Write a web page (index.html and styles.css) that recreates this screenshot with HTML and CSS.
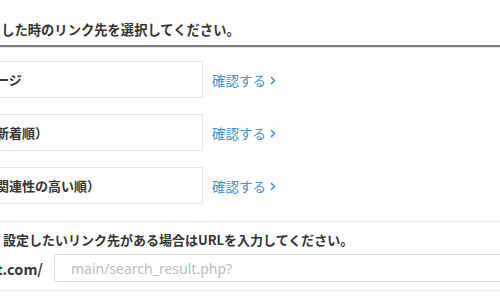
FILE: index.html
```html
<!DOCTYPE html>
<html lang="ja">
<head>
    <meta charset="UTF-8">
    <meta name="viewport" content="width=device-width, initial-scale=1.0">
    <title>リンク先設定</title>
    <link rel="stylesheet" href="styles.css">
</head>
<body>
    <div class="page">
        <h2 class="section-title">クリックした時のリンク先を選択してください。</h2>

        <ul class="link-list">
            <li class="link-row">
                <div class="link-box">商品詳細ページ</div>
                <a href="#" class="check-link">確認する<svg class="chev" width="6" height="9" viewBox="0 0 6 9"><path d="M1 1l3.5 3.5L1 8" fill="none" stroke="currentColor" stroke-width="1.6"/></svg></a>
            </li>
            <li class="link-row">
                <div class="link-box">検索結果（新着順）</div>
                <a href="#" class="check-link">確認する<svg class="chev" width="6" height="9" viewBox="0 0 6 9"><path d="M1 1l3.5 3.5L1 8" fill="none" stroke="currentColor" stroke-width="1.6"/></svg></a>
            </li>
            <li class="link-row">
                <div class="link-box">検索結果（関連性の高い順）</div>
                <a href="#" class="check-link">確認する<svg class="chev" width="6" height="9" viewBox="0 0 6 9"><path d="M1 1l3.5 3.5L1 8" fill="none" stroke="currentColor" stroke-width="1.6"/></svg></a>
            </li>
        </ul>

        <div class="custom-url">
            <p class="custom-note">設定したいリンク先がある場合はURLを入力してください。</p>
            <div class="url-row">
                <div class="url-prefix"><span>https://www.example-test.com/</span></div>
                <input type="text" class="url-input" placeholder="main/search_result.php?">
            </div>
        </div>
    </div>
</body>
</html>
```

FILE: styles.css
```css
:root {
    --text-color: #333;
    --link-color: #4a8fc8;
    --line-color: #e8e8e8;
    --box-border: #e6e6e6;
}

* {
    margin: 0;
    padding: 0;
    box-sizing: border-box;
    font-family: "Noto Sans CJK JP", "Noto Sans", sans-serif;
}

body {
    color: var(--text-color);
    background-color: #fff;
    overflow: hidden;
}

.page {
    margin-left: -70px;
    width: 640px;
}

.section-title {
    font-size: 13.3px;
    font-weight: 700;
    line-height: 20px;
    padding: 20px 0 5px 18px;
    border-bottom: 2px solid #7b7b7b;
    box-shadow: 0 1px 0 #dde2e6;
    white-space: nowrap;
}

.link-list {
    list-style: none;
    margin-top: 14px;
    display: flex;
    flex-direction: column;
    gap: 16px;
}

.link-row {
    display: flex;
    align-items: center;
}

.link-box {
    width: 273px;
    height: 37px;
    border: 1px solid var(--box-border);
    padding-left: 0;
    font-size: 13px;
    font-weight: 700;
    line-height: 35px;
    white-space: nowrap;
    overflow: hidden;
}

.check-link {
    display: flex;
    align-items: center;
    margin-left: 9px;
    color: var(--link-color);
    font-size: 13.5px;
    text-decoration: none;
    white-space: nowrap;
}

.chev {
    margin-left: 4px;
    margin-top: 1px;
}

.custom-url {
    margin-top: 17px;
    border-top: 1px solid var(--line-color);
    border-bottom: 1px solid var(--line-color);
    padding: 8px 0 8px;
}

.custom-note {
    font-size: 13px;
    font-weight: 700;
    line-height: 20px;
    padding-left: 73px;
    white-space: nowrap;
}

.url-row {
    display: flex;
    align-items: center;
    margin-top: 4px;
}

.url-prefix {
    width: 113px;
    display: flex;
    justify-content: flex-end;
    overflow: hidden;
    white-space: nowrap;
    font-size: 14.5px;
    font-weight: 700;
}

.url-input {
    flex: 1;
    margin-left: 11px;
    height: 28px;
    border: 1px solid #dcdcdc;
    border-radius: 3px;
    padding-left: 16px;
    font-family: "Noto Sans", sans-serif;
    font-size: 14px;
    color: var(--text-color);
}

.url-input::placeholder {
    color: #bdbdbd;
}
```
